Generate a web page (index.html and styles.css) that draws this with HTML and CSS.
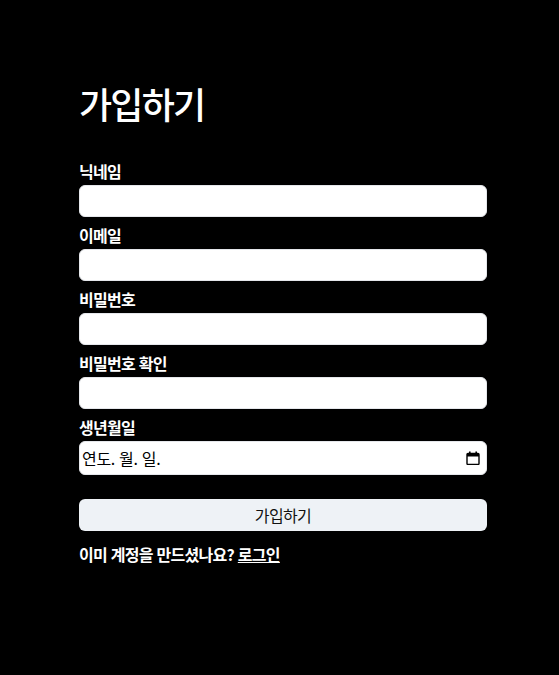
FILE: index.html
```html
<!DOCTYPE html>
<html lang="ko">
<head>
<meta charset="utf-8">
<link rel="stylesheet" href="styles.css">
</head>
<body>
<main class="page">
  <h1 class="title">가입하기</h1>
  <form class="form">
    <label class="field"><span class="label">닉네임</span><input class="input" type="text"></label>
    <label class="field"><span class="label">이메일</span><input class="input" type="email"></label>
    <label class="field"><span class="label">비밀번호</span><input class="input" type="password"></label>
    <label class="field"><span class="label">비밀번호 확인</span><input class="input" type="password"></label>
    <div class="field"><span class="label">생년월일</span>
      <div class="input date"><span class="date-text">연도. 월. 일.</span>
        <svg class="cal" width="14" height="14" viewBox="0 0 14 14" aria-hidden="true">
          <rect x="3" y="0.5" width="1.6" height="2.5" fill="#000"/>
          <rect x="9.4" y="0.5" width="1.6" height="2.5" fill="#000"/>
          <rect x="1" y="2.5" width="12" height="11" rx="1" fill="none" stroke="#000" stroke-width="1.4"/>
          <rect x="1" y="2.5" width="12" height="3" fill="#000"/>
        </svg>
      </div>
    </div>
    <button class="submit" type="button">가입하기</button>
  </form>
  <p class="footer">이미 계정을 만드셨나요? <a class="link" href="#">로그인</a></p>
</main>
</body>
</html>
```
FILE: styles.css
```css
html, body {
  margin: 0;
  background: #000;
  color: #fff;
  font-family: "Noto Sans CJK KR", "Noto Sans", sans-serif;
}
.page {
  width: 408px;
  padding: 79px 0 0 79px;
}
.title {
  margin: 0 0 38px;
  font-size: 36px;
  font-weight: 500;
  line-height: 48px;
  letter-spacing: -0.05em;
}
.form {
  display: flex;
  flex-direction: column;
}
.field {
  display: flex;
  flex-direction: column;
  margin-bottom: 12px;
}
.label {
  font-size: 16px;
  font-weight: 700;
  line-height: 12px;
  margin-bottom: 8px;
  letter-spacing: -0.045em;
}
.input {
  box-sizing: border-box;
  height: 32px;
  border: 1px solid #e5e7eb;
  border-radius: 6px;
  background: #fff;
  padding: 0 2px;
  font-size: 16px;
  font-family: inherit;
}
.date {
  height: 34px;
  display: flex;
  align-items: center;
  justify-content: space-between;
  padding: 0 6px 0 2px;
  color: #000;
}
.date-text {
  letter-spacing: -0.02em;
}
.cal {
  display: block;
}
.submit {
  margin-top: 12px;
  height: 32px;
  border: none;
  border-radius: 6px;
  background: #eef2f6;
  color: #111;
  font-size: 16px;
  font-family: inherit;
  letter-spacing: -0.04em;
}
.footer {
  margin: 13px 0 0;
  font-size: 16px;
  font-weight: 700;
  line-height: 20px;
  letter-spacing: -0.045em;
}
.link {
  color: #fff;
  text-decoration: underline;
}
```
